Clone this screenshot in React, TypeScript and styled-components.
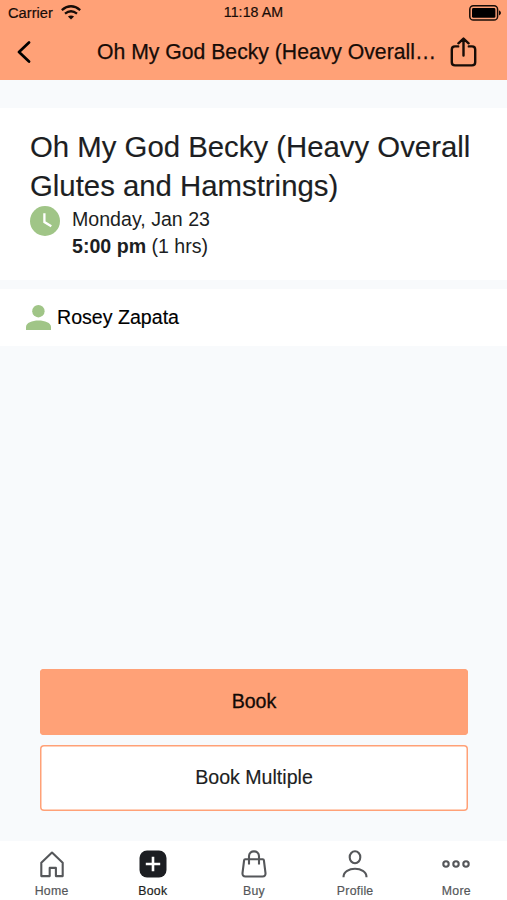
import React from "react";
import styled, { createGlobalStyle } from "styled-components";

const GlobalStyle = createGlobalStyle`
  * { box-sizing: border-box; }
  body { margin: 0; background: #f8fafc; }
  h1, p { margin: 0; font-weight: 400; }
  svg { display: block; flex: none; }
  button { font: inherit; color: inherit; background: none; border: 0; padding: 0; }
`;

const Screen = styled.div`
  display: flex;
  flex-direction: column;
  width: 507px;
  height: 900px;
  overflow: hidden;
  background: #f8fafc;
  color: #1c1e22;
  font-family: "Liberation Sans", Arial, sans-serif;
  font-size: 19.6px;
`;

const Header = styled.header`
  height: 80px;
  background: #ffa177;
  color: #170c07;
`;

const StatusBar = styled.div`
  display: grid;
  grid-template-columns: 1fr auto 1fr;
  align-items: center;
  height: 25px;
  padding: 0 5px 0 8px;
  font-size: 14.2px;
  -webkit-text-stroke: 0.2px;
`;

const Carrier = styled.div`
  display: flex;
  align-items: center;
  gap: 8px;
  font-size: 14.7px;
`;

const Clock = styled.div`
  padding: 0 3px 2px 0;
  letter-spacing: 0.08px;
`;

const Battery = styled.div`
  justify-self: end;
`;

const NavBar = styled.div`
  display: grid;
  grid-template-columns: 97px 339px 71px;
  align-items: center;
  height: 54px;
`;

const NavTitle = styled.div`
  font-size: 21.2px;
  line-height: 30px;
  white-space: nowrap;
  -webkit-text-stroke: 0.25px;
`;

const IconButton = styled.button<{ $inset: number }>`
  justify-self: start;
  margin-left: ${(p) => p.$inset}px;
`;

const Summary = styled.section`
  height: 172px;
  margin-top: 28px;
  padding: 19px 30px 0;
  background: #fff;
`;

const ClassTitle = styled.h1`
  margin-bottom: 1px;
  font-size: 29.35px;
  line-height: 39px;
  white-space: nowrap;
  -webkit-text-stroke: 0.15px;
`;

const Schedule = styled.div`
  display: flex;
  gap: 12px;
  line-height: 27px;
`;

const Instructor = styled.section`
  display: flex;
  align-items: center;
  gap: 6px;
  height: 57px;
  margin-top: 9px;
  padding-left: 26px;
  background: #fff;
  color: #000;
  -webkit-text-stroke: 0.15px;
`;

const Actions = styled.div`
  display: grid;
  gap: 10px;
  margin: auto 39px 30px 40px;
`;

const ActionButton = styled.button<{ $filled?: boolean }>`
  height: 66px;
  padding-bottom: 1px;
  border: 0;
  box-shadow: inset 0 0 0 1.5px #ffa177;
  border-radius: 4px;
  background: ${(p) => (p.$filled ? "#ffa177" : "#fff")};
  color: ${(p) => (p.$filled ? "#120a06" : "#1c1e22")};
  -webkit-text-stroke: ${(p) => (p.$filled ? "0.3px" : "0.15px")};
`;

const TabBar = styled.nav`
  display: grid;
  grid-template-columns: repeat(5, 101.2px);
  height: 59px;
  background: #fff;
`;

const Tab = styled.button<{ $active?: boolean }>`
  display: flex;
  flex-direction: column;
  align-items: center;
  gap: 5px;
  padding-top: 8px;
  padding-left: 2px;
  color: ${(p) => (p.$active ? "#1c1e22" : "#55575a")};
  font-size: 12.3px;
  line-height: 14px;
  letter-spacing: 0.25px;
  -webkit-text-stroke: 0.2px;
`;

const WifiIcon = () => (
  <svg width="20" height="15" viewBox="0 0 20 15" fill="none" stroke="currentColor" strokeWidth="2.3">
    <path d="M.8 5.1Q10-2.5 19.2 5.1M4 8.6q6-4.8 12 0" />
    <path d="M6.9 11.6q3.1-2.4 6.2 0L10 14.5z" fill="currentColor" stroke="none" />
  </svg>
);

const BatteryIcon = () => (
  <svg width="33" height="16" viewBox="0 0 33 16">
    <rect x=".8" y=".8" width="27.8" height="14.2" rx="3.6" fill="none" stroke="currentColor" strokeWidth="1.5" />
    <rect x="3" y="3" width="23.4" height="9.8" rx="1.4" fill="#000" />
    <path d="M30 5.3q4 2.6 0 5.2z" fill="currentColor" />
  </svg>
);

const BackIcon = () => (
  <svg width="14" height="22" viewBox="0 0 14 22" fill="none" stroke="#000" strokeWidth="2.7" strokeLinecap="round" strokeLinejoin="round">
    <path d="M12 1.5 2 11l10 9.5" />
  </svg>
);

const ShareIcon = () => (
  <svg width="27" height="30" viewBox="0 0 27 30" fill="none" stroke="currentColor" strokeWidth="2.4" strokeLinecap="round" strokeLinejoin="round">
    <path d="M8.2 9.4H5q-3.2 0-3.2 3.2v12.6q0 3.2 3.2 3.2h17q3.2 0 3.2-3.2V12.6q0-3.2-3.2-3.2h-3.2M13.5 18.5V1.8M8.4 6.3l5.1-4.7 5.1 4.7" />
  </svg>
);

const ClockIcon = () => (
  <svg width="30" height="30" viewBox="0 0 30 30">
    <circle cx="15" cy="15" r="15" fill="#a0c587" />
    <path d="M14.4 7.2v8.9l6.9 4.2" fill="none" stroke="#fff" strokeWidth="2.3" />
  </svg>
);

const InstructorIcon = () => (
  <svg width="25" height="25" viewBox="0 0 25 25" fill="#a0c587">
    <circle cx="12.4" cy="6.2" r="6.2" />
    <path d="M0 25v-3c0-4.2 6.1-6.4 12.5-6.4S25 17.8 25 22v3z" />
  </svg>
);

const tabIconProps = {
  width: 28,
  height: 30,
  viewBox: "0 0 28 30",
  fill: "none",
  stroke: "currentColor",
  strokeWidth: 2.1,
  strokeLinejoin: "round" as const,
};

const HomeIcon = () => (
  <svg {...tabIconProps}>
    <path d="M3.3 27.1V13.7L14 3.6l10.7 10.1v13.4h-6.8v-8.2h-6.2v8.2z" />
  </svg>
);

const BookIcon = () => (
  <svg {...tabIconProps}>
    <rect x=".5" y="1.5" width="27" height="27" rx="7.5" fill="currentColor" stroke="none" />
    <path d="M6.8 15h14.4M14 7.8v14.4" stroke="#fff" strokeWidth="2.6" />
  </svg>
);

const BagIcon = () => (
  <svg {...tabIconProps}>
    <path d="M5.2 10.3h17.6q1 0 1.1 1l1.6 12.8q.2 3.4-2.9 3.4H5.4q-3.1 0-2.9-3.4L4.1 11.3q.1-1 1.1-1zM9 15.5V7.2C9 .7 19 .7 19 7.2v8.3" />
  </svg>
);

const ProfileIcon = () => (
  <svg {...tabIconProps}>
    <ellipse cx="14" cy="8.3" rx="5.3" ry="6" />
    <path d="M2.5 28.2c0-11.2 23-11.2 23 0" />
  </svg>
);

const MoreIcon = () => (
  <svg {...tabIconProps}>
    <circle cx="4" cy="15" r="2.7" />
    <circle cx="14" cy="15" r="2.7" />
    <circle cx="24" cy="15" r="2.7" />
  </svg>
);

const tabs = [
  { label: "Home", Icon: HomeIcon },
  { label: "Book", Icon: BookIcon },
  { label: "Buy", Icon: BagIcon },
  { label: "Profile", Icon: ProfileIcon },
  { label: "More", Icon: MoreIcon },
];

export default function App() {
  return (
    <Screen>
      <GlobalStyle />
      <Header>
        <StatusBar>
          <Carrier>Carrier <WifiIcon /></Carrier>
          <Clock>11:18 AM</Clock>
          <Battery><BatteryIcon /></Battery>
        </StatusBar>
        <NavBar>
          <IconButton $inset={17} aria-label="Back"><BackIcon /></IconButton>
          <NavTitle>Oh My God Becky (Heavy Overall…</NavTitle>
          <IconButton $inset={14} aria-label="Share"><ShareIcon /></IconButton>
        </NavBar>
      </Header>
      <Summary>
        <ClassTitle>Oh My God Becky (Heavy Overall<br />Glutes and Hamstrings)</ClassTitle>
        <Schedule>
          <ClockIcon />
          <div>
            <p>Monday, Jan 23</p>
            <p><strong>5:00 pm</strong> (1 hrs)</p>
          </div>
        </Schedule>
      </Summary>
      <Instructor><InstructorIcon />Rosey Zapata</Instructor>
      <Actions>
        <ActionButton $filled>Book</ActionButton>
        <ActionButton>Book Multiple</ActionButton>
      </Actions>
      <TabBar>
        {tabs.map(({ label, Icon }) => (
          <Tab key={label} $active={label === "Book"}>
            <Icon />
            {label}
          </Tab>
        ))}
      </TabBar>
    </Screen>
  );
}
